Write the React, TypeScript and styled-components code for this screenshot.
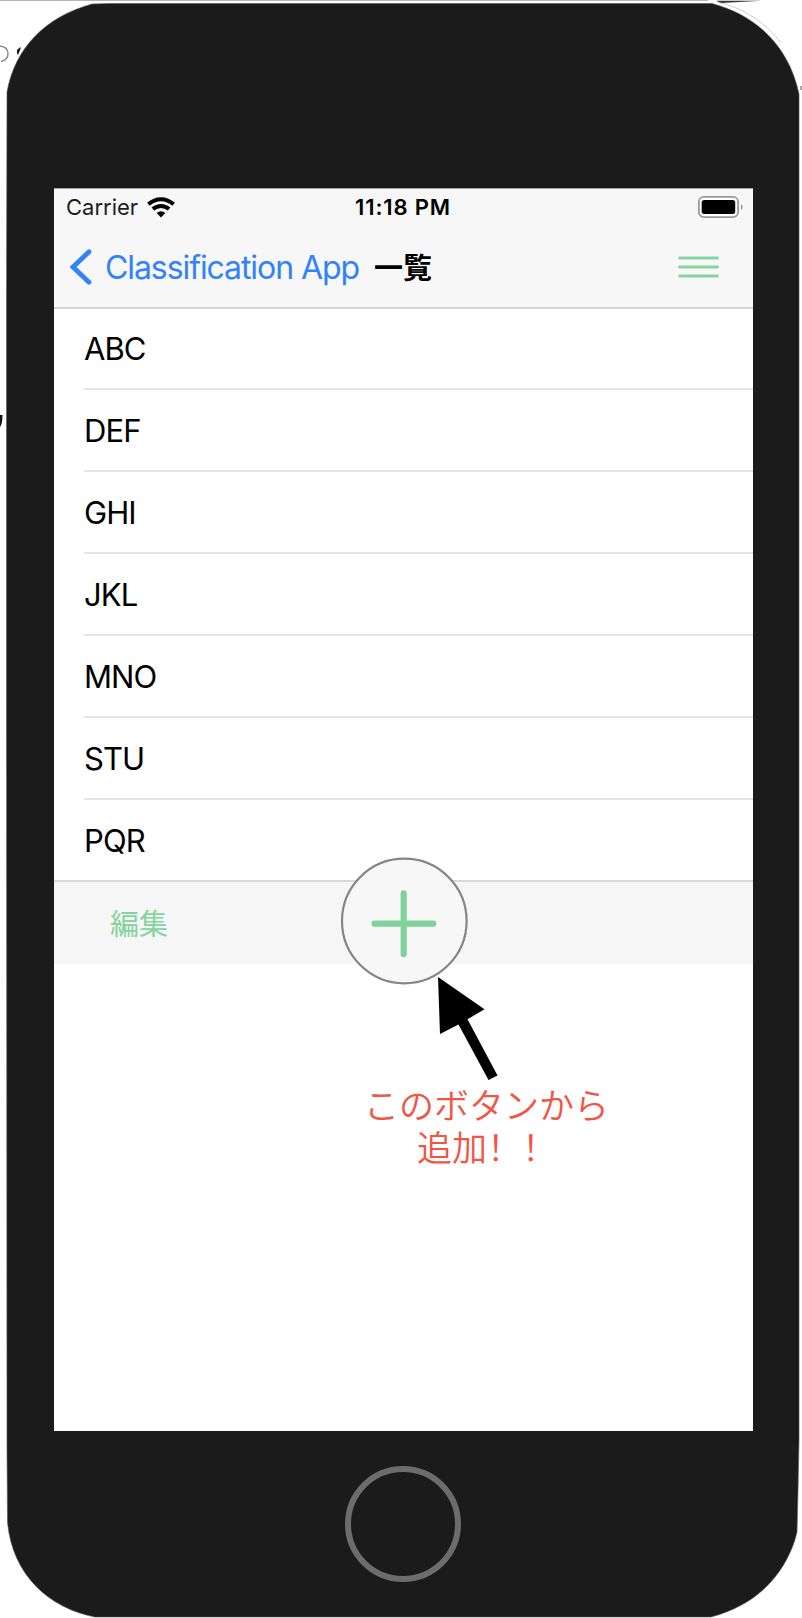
import React from 'react';
import styled, { createGlobalStyle } from 'styled-components';

const GlobalStyle = createGlobalStyle`
  *, *::before, *::after { box-sizing: border-box; }
  body { margin: 0; background: #fff; }
`;

const Stage = styled.main`
  position: relative;
  isolation: isolate;
  width: 802px;
  height: 1618px;
  overflow: hidden;
  padding: 188px 49px 0 54px;
  background: #fff;
  font-family: Inter, 'Noto Sans CJK JP', sans-serif;
  color: #000;
`;

const PhoneBody = styled.svg`
  position: absolute;
  inset: 0;
  z-index: -1;
`;

const Screen = styled.section`
  display: flex;
  flex-direction: column;
  height: 1243px;
  background: #fff;
`;

const Header = styled.header`
  height: 121px;
  background: #f7f7f7;
  border-top: 1px solid #a5a5a5;
  border-bottom: 2px solid #d4d4d4;
`;

const StatusBar = styled.div`
  display: grid;
  grid-template-columns: 1fr auto 1fr;
  align-items: center;
  height: 38px;
  padding: 0 10px 2px 12px;
`;

const Carrier = styled.div`
  display: flex;
  align-items: center;
  gap: 9px;
  font-size: 22px;
  letter-spacing: 0;
  color: #1c1c1c;
`;

const Clock = styled.div`
  margin-right: 3px;
  font-size: 22px;
  font-weight: 600;
  letter-spacing: 0.85px;
`;

const BatteryIcon = styled.svg`
  justify-self: end;
`;

const NavBar = styled.nav`
  display: flex;
  align-items: center;
  height: 80px;
  padding: 0 34px 0 16px;
`;

const BackLink = styled.div`
  display: flex;
  align-items: center;
  gap: 13px;
  color: #3182fb;
  font-size: 32px;
  letter-spacing: -1.08px;
  white-space: nowrap;
`;

const Title = styled.h1`
  flex: 1;
  margin: 3px 0 0 15px;
  font-size: 29px;
  line-height: 40px;
  font-weight: 700;
`;

const List = styled.ul`
  margin: 0;
  padding: 0;
  list-style: none;
`;

const Row = styled.li`
  display: flex;
  height: 82px;
  padding-left: 30px;

  &:first-child { height: 81px; }
`;

const RowLabel = styled.div<{ $last: boolean }>`
  flex: 1;
  display: flex;
  align-items: center;
  border-bottom: ${({ $last }) => ($last ? 'none' : '2px solid #e4e4e4')};
  padding-bottom: ${({ $last }) => ($last ? '2px' : '0')};
  font-size: 31px;
  letter-spacing: -0.9px;
`;

const Toolbar = styled.footer`
  position: relative;
  display: flex;
  align-items: center;
  height: 84px;
  margin-top: -2px;
  padding: 0 0 3px 56px;
  background: #f6f6f6;
  border-top: 2px solid #d9d9d9;
`;

const EditLabel = styled.span`
  font-size: 29px;
  color: #85d3a0;
`;

const AddButton = styled.svg`
  position: absolute;
  left: 286px;
  top: -25px;
`;

const Hint = styled.div`
  display: flex;
  flex-direction: column;
  margin-left: 310px;
  color: #f05545;
  font-family: 'Noto Sans CJK JP', sans-serif;
  font-size: 35px;
  font-weight: 350;
  line-height: 42px;
  white-space: nowrap;
`;

const HintArrow = styled.svg`
  margin: 12px 0 2px 73px;
`;

const HintSecondLine = styled.span`
  padding-left: 53px;
`;

const Exclamation = styled.span`
  font-family: 'Noto Sans CJK SC', sans-serif;
`;

const HomeButton = styled.div`
  width: 116px;
  height: 116px;
  margin: 35px 0 0 291px;
  border: 6px solid #6c6c6c;
  border-radius: 50%;
`;

const items = ['ABC', 'DEF', 'GHI', 'JKL', 'MNO', 'STU', 'PQR'];

export default function App() {
  return (
    <>
      <GlobalStyle />
      <Stage>
        <PhoneBody width="802" height="1618" viewBox="0 0 802 1618">
          <path d="M0 .5H708" stroke="#b9b5b7" strokeWidth="1" />
          <path d="M716 .8H762L721 3Z" fill="#333" />
          <path d="M718 2.2C744 8 766 23 781 43" fill="none" stroke="#aaa" strokeWidth=".6" />
          <path d="M0 46Q8 47 8 53.5Q8 60 1 61.5" fill="none" stroke="#888" strokeWidth="1.4" />
          <path d="M17 50L20 47.5H21L18 55L17 53Z" fill="#111" />
          <path d="M0 415H2.5Q2.5 424 0 427Z" fill="#111" />
          <path d="M801 86V90" stroke="#555" />
          <path
            d="M7 92C15 48 45 17 92 4L110 3.5H712C756 15 789 46 799 94V1440L798 1490L797 1532Q795 1541 792 1548C778 1582 752 1606 711 1617H95C48 1608 12 1574 7.5 1522L7 1450L6.5 700V300Z"
            fill="#1b1b1b" stroke="#555" strokeWidth=".6"
          />
        </PhoneBody>
        <Screen>
          <Header>
            <StatusBar>
              <Carrier>
                Carrier
                <svg width="28" height="21" viewBox="0 0 28 21">
                  <g fill="none" stroke="#000" strokeWidth="4">
                    <path d="M1.4 7.3Q7 2.2 14 2.2T26.6 7.3" />
                    <path d="M5.9 12.1Q9.5 9 14 9T22.1 12.1" />
                  </g>
                  <path d="M9.7 16Q14 12.6 18.3 16L14 20.4Z" />
                </svg>
              </Carrier>
              <Clock>11:18 PM</Clock>
              <BatteryIcon width="45" height="22" viewBox="0 0 45 22">
                <rect x=".9" y=".9" width="39.2" height="20.2" rx="5" fill="#fff" stroke="#999" strokeWidth="1.8" />
                <rect x="3.7" y="4" width="33.5" height="14" rx="2.5" />
                <path d="M43 8Q46 11 43 14Z" fill="#888" />
              </BatteryIcon>
            </StatusBar>
            <NavBar>
              <BackLink>
                <svg width="22" height="36" viewBox="0 0 22 36">
                  <path d="M19 2.8L3 18L19 33.2" fill="none" stroke="currentColor" strokeWidth="4.8" strokeLinecap="round" />
                </svg>
                Classification App
              </BackLink>
              <Title>一覧</Title>
              <svg width="41" height="22" viewBox="0 0 41 22">
                <path d="M1.5 2H39.5M1.5 11H39.5M1.5 20H39.5" stroke="#86d5a0" strokeWidth="2.8" strokeLinecap="round" />
              </svg>
            </NavBar>
          </Header>
          <List>
            {items.map((item, i) => (
              <Row key={item}>
                <RowLabel $last={i === items.length - 1}>{item}</RowLabel>
              </Row>
            ))}
          </List>
          <Toolbar>
            <EditLabel>編集</EditLabel>
            <AddButton width="128" height="128" viewBox="0 0 128 128">
              <circle cx="64.3" cy="64" r="62.3" fill="#f7f7f7" stroke="#858585" strokeWidth="2.2" />
              <path d="M34.6 66.7H93.3M63.7 36.3V97" stroke="#80d29a" strokeWidth="6.2" strokeLinecap="round" />
            </AddButton>
          </Toolbar>
          <Hint>
            <HintArrow width="62" height="105" viewBox="0 0 62 105">
              <path d="M1 1L47.5 33.3L30.5 43.3L60.5 99.5L51.5 104L21.5 48.5L3 58Z" />
            </HintArrow>
            <span>このボタンから</span>
            <HintSecondLine>追加<Exclamation>！！</Exclamation></HintSecondLine>
          </Hint>
        </Screen>
        <HomeButton />
      </Stage>
    </>
  );
}
